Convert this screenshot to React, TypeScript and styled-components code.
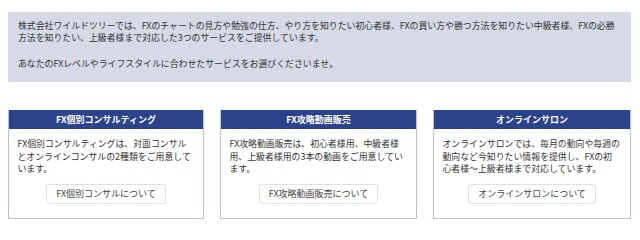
import styled, { createGlobalStyle } from "styled-components";

const GlobalStyle = createGlobalStyle`
    body{
        margin: 0;
        background: #fff;
        font-family: "Noto Sans CJK JP", "Noto Sans", sans-serif;
        color: #333;
    }
`
const Wrapper = styled.div`
    width: 640px;
    padding: 12px 9px 0 8px;
    box-sizing: border-box;
`
const Intro = styled.div`
    background-color: #d6dae7;
    padding: 8px 10px 12px 10px;
    font-size: 8.9px;
    line-height: 12px;
    p{
        margin: 0 0 14px 0;
    }
    p:last-child{
        margin-bottom: 0;
    }
`
const CardList = styled.div`
    margin-top: 28px;
    display: grid;
    grid-template-columns: 196px 197px 198px;
    gap: 16px;
`
const Card = styled.div`
    border: 1px solid #b9c0da;
    border-top: none;
    display: flex;
    flex-direction: column;
    height: 109px;
    box-sizing: border-box;
`
const CardTitle = styled.div`
    height: 19px;
    background-color: #2c428a;
    color: #fff;
    font-weight: bold;
    font-size: 9px;
    display: flex;
    align-items: center;
    justify-content: center;
`
const CardBody = styled.div`
    padding: 9px 8.5px 14px 8.5px;
    font-size: 8.9px;
    line-height: 12.5px;
    flex: 1;
    display: flex;
    flex-direction: column;
`
const CardText = styled.p`
    margin: 0;
    flex: 1;
    white-space: nowrap;
`
const MoreButton = styled.div`
    align-self: center;
    height: 20px;
    padding: 0 9px;
    border: 1px solid #e0e0e0;
    border-radius: 3px;
    box-sizing: border-box;
    display: flex;
    align-items: center;
    color: #444;
    font-size: 9px;
    background: #fff;
`

const services = [
    {
        title: "FX個別コンサルティング",
        lines: ["FX個別コンサルティングは、対面コンサル", "とオンラインコンサルの2種類をご用意して", "います。"],
        button: "FX個別コンサルについて",
    },
    {
        title: "FX攻略動画販売",
        lines: ["FX攻略動画販売は、初心者様用、中級者様", "用、上級者様用の3本の動画をご用意してい", "ます。"],
        button: "FX攻略動画販売について",
    },
    {
        title: "オンラインサロン",
        lines: ["オンラインサロンでは、毎月の動向や毎週の", "動向など今知りたい情報を提供し、FXの初", "心者様〜上級者様まで対応しています。"],
        button: "オンラインサロンについて",
    },
]

function App() {
    return (
        <Wrapper>
            <GlobalStyle />
            <Intro>
                <p>
                    株式会社ワイルドツリーでは、FXのチャートの見方や勉強の仕方、やり方を知りたい初心者様、FXの買い方や勝つ方法を知りたい中級者様、FXの必勝方法を知りたい、上級者様まで対応した3つのサービスをご提供しています。
                </p>
                <p>あなたのFXレベルやライフスタイルに合わせたサービスをお選びくださいませ。</p>
            </Intro>
            <CardList>
                {services.map(service =>
                    <Card key={service.title}>
                        <CardTitle>{service.title}</CardTitle>
                        <CardBody>
                            <CardText>
                                {service.lines.map((line, i) =>
                                    <span key={i}>{line}{i < service.lines.length - 1 ? <br /> : null}</span>
                                )}
                            </CardText>
                            <MoreButton>{service.button}</MoreButton>
                        </CardBody>
                    </Card>
                )}
            </CardList>
        </Wrapper>
    )
}

export default App;
